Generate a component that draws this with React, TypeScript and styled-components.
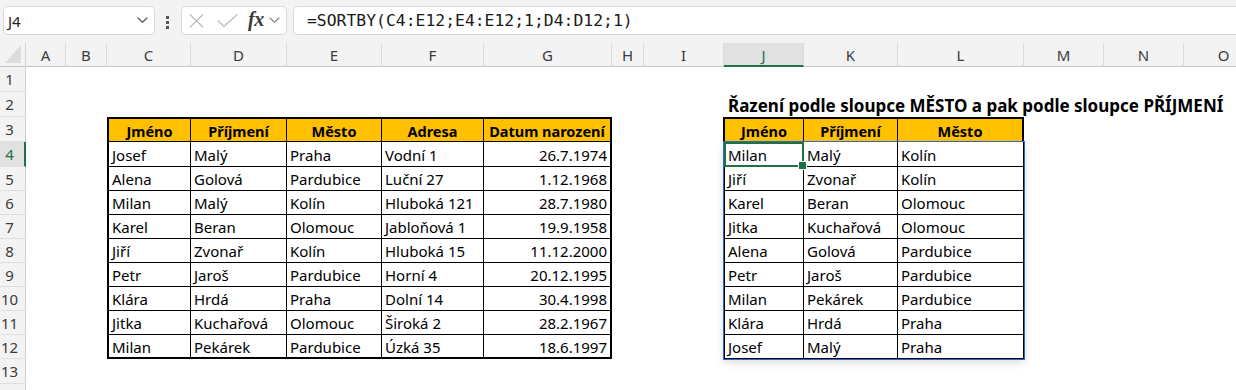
import React from "react";
import styled, { createGlobalStyle, css } from "styled-components";

const FONT = `"Noto Sans", "Liberation Sans", sans-serif`;
const GREEN = "#1e7145";
const CHROME = "#f3f3f3";

const COLS = [40, 41, 84, 96, 95, 102, 128, 32, 80, 80, 94, 126, 80, 80, 80];
const LETTERS = "ABCDEFGHIJKLMNO".split("");
const ROWS = [25, 25, 25, 25, 24, 24, 24, 24, 24, 24, 24, 24, 25, 24];
const LABELLED_ROWS = 13;
const ACTIVE_COL = "J";
const ACTIVE_ROW = 4;

const px = (a: number[]) => a.map((v) => `${v}px`).join(" ");
const shrinkEnds = (a: number[], by: number, byEnd = by) =>
  a.map((v, i) => v - (i === 0 ? by : 0) - (i === a.length - 1 ? byEnd : 0));

const GlobalStyle = createGlobalStyle`
  html, body { margin: 0; padding: 0; background: #fff; }
  body { font-family: ${FONT}; color: #000; }
  * { box-sizing: border-box; }
`;

const Window = styled.div`
  width: 1236px;
  height: 390px;
  overflow: hidden;
  background: #fff;
  display: flex;
  flex-direction: column;
`;

/* ---------- formula bar ---------- */
const FormulaBar = styled.div`
  flex: none;
  height: 43px;
  background: ${CHROME};
  display: flex;
  align-items: flex-start;
  padding: 6px 0 0 3px;
`;

const Field = styled.div`
  height: 29px;
  background: #fff;
  border: 1px solid #d9d9d9;
  border-radius: 5px;
  display: flex;
  align-items: center;
`;

const NameBox = styled(Field)`
  width: 152px;
  padding: 0 6px 0 4px;
  justify-content: space-between;
  font-size: 15px;
  color: #1f1f1f;
`;

const Dots = styled.div`
  width: 3px;
  margin: 10px 12px 0 11px;
  display: flex;
  flex-direction: column;
  gap: 2px;
  & > span {
    width: 3px;
    height: 3px;
    background: #555;
  }
`;

const FxGroup = styled(Field)`
  width: 106px;
  padding: 0 2px 0 6px;
`;

const IconGap = styled.span`
  width: 12px;
`;

const FxText = styled.span`
  font-family: "Liberation Serif", "DejaVu Serif", serif;
  font-style: italic;
  font-weight: bold;
  font-size: 20px;
  color: #3a3a3a;
  margin: -3px 5px 0 10px;
  letter-spacing: -0.3px;
`;

const FormulaInput = styled(Field)`
  flex: 1;
  margin-left: 6px;
  margin-right: -6px;
  padding-left: 13px;
  font-family: "DejaVu Sans Mono", "Liberation Mono", monospace;
  font-size: 16.4px;
  color: #1a1a1a;
  white-space: nowrap;
`;

const Chevron = ({ w = 11, color = "#555" }: { w?: number; color?: string }) => (
  <svg width={w} height={w * 0.55} viewBox="0 0 11 6" fill="none">
    <polyline points="0.7,0.7 5.5,5.2 10.3,0.7" stroke={color} strokeWidth="1.3" />
  </svg>
);

const CancelIcon = () => (
  <svg width="17" height="14" viewBox="0 0 17 14" fill="none">
    <path d="M2 0.5 L15 13.2 M15 0.5 L2 13.2" stroke="#bcbcbc" strokeWidth="1.3" />
  </svg>
);

const EnterIcon = () => (
  <svg width="21" height="13" viewBox="0 0 21 13" fill="none">
    <path d="M0.8 6.5 L7 12.3 L20.3 0.6" stroke="#bcbcbc" strokeWidth="1.3" />
  </svg>
);

/* ---------- sheet grid ---------- */
const Sheet = styled.div`
  display: grid;
  grid-template-columns: 26px ${px(COLS)};
  grid-template-rows: 24px ${px(ROWS)};
  font-size: 15px;
`;

const Corner = styled.div`
  grid-column: 1;
  grid-row: 1;
  background: ${CHROME};
  border-right: 1px solid #d4d4d4;
  border-bottom: 1px solid #c4c4c4;
  position: relative;
  &::after {
    content: "";
    position: absolute;
    right: 4px;
    bottom: 3px;
    width: 16px;
    height: 18px;
    background: #dcdcdc;
    clip-path: polygon(100% 0, 100% 100%, 0 100%);
  }
`;

const ColHeader = styled.div<{ $active?: boolean }>`
  grid-row: 1;
  background: ${CHROME};
  border-right: 1px solid #dadada;
  border-bottom: 1px solid #c4c4c4;
  display: flex;
  align-items: center;
  justify-content: center;
  color: #3b3b3b;
  font-size: 15px;
  padding-top: 1px;
  ${(p) =>
    p.$active &&
    css`
      background: #e1e1e1;
      color: ${GREEN};
      border-bottom: 2px solid ${GREEN};
    `}
`;

const RowHeader = styled.div<{ $active?: boolean }>`
  grid-column: 1;
  background: ${CHROME};
  border-right: 1px solid #cfcfcf;
  border-bottom: 1px solid #dedede;
  display: flex;
  align-items: center;
  justify-content: center;
  padding-right: 6px;
  color: #3b3b3b;
  font-size: 15px;
  ${(p) =>
    p.$active &&
    css`
      background: #e1e1e1;
      color: ${GREEN};
      border-right: 2px solid ${GREEN};
      padding-right: 5px;
    `}
`;

/* ---------- tables ---------- */
type Align = "left" | "right" | "center";

const Cell = styled.div<{
  $align?: Align;
  $head?: boolean;
  $lastCol?: boolean;
  $lastRow?: boolean;
  $selected?: boolean;
}>`
  position: relative;
  display: flex;
  align-items: center;
  padding: 1px 3px 0 3px;
  white-space: nowrap;
  border-right: ${(p) => (p.$lastCol ? "none" : "1px solid #000")};
  border-bottom: ${(p) => (p.$lastRow ? "none" : "1px solid #000")};
  justify-content: ${(p) =>
    p.$align === "right" ? "flex-end" : p.$align === "center" ? "center" : "flex-start"};
  ${(p) =>
    p.$head &&
    css`
      background: #ffc000;
      font-weight: bold;
      font-size: 14.5px;
    `}
  ${(p) =>
    p.$selected &&
    css`
      &::after {
        content: "";
        position: absolute;
        left: -1px;
        top: 0;
        right: -1px;
        bottom: -1px;
        border: 2px solid ${GREEN};
        z-index: 2;
      }
      &::before {
        content: "";
        position: absolute;
        right: -4px;
        bottom: -4px;
        width: 7px;
        height: 7px;
        background: ${GREEN};
        border: 1px solid #fff;
        z-index: 3;
      }
    `}
`;

const SourceTable = styled.div<{ $cols: number[]; $rows: number[] }>`
  grid-column: 4 / 9;
  grid-row: 4 / 14;
  display: grid;
  border: 2px solid #000;
  grid-template-columns: ${(p) => px(p.$cols)};
  grid-template-rows: ${(p) => px(p.$rows)};
`;

const Title = styled.div`
  grid-column: 11 / 17;
  grid-row: 3;
  align-self: end;
  padding: 0 0 0 4px;
  font-weight: bold;
  font-size: 17px;
  line-height: 23px;
  white-space: nowrap;
`;

const SpillTable = styled.div`
  grid-column: 11 / 14;
  grid-row: 4 / 14;
  display: flex;
  flex-direction: column;
`;

const SpillHead = styled.div<{ $cols: number[]; $h: number }>`
  display: grid;
  height: ${(p) => p.$h}px;
  margin: 0 0 0 -1px;
  border: 2px solid #000;
  border-bottom: 1px solid #000;
  grid-template-columns: ${(p) => px(p.$cols)};
`;

const SpillBody = styled.div<{ $cols: number[]; $rows: number[] }>`
  display: grid;
  border: 1px solid #000;
  border-top: none;
  grid-template-columns: ${(p) => px(p.$cols)};
  grid-template-rows: ${(p) => px(p.$rows)};
  box-shadow: 0 0 0 1px #2d66cf, 0 3px 9px rgba(0, 0, 0, 0.16);
`;

const PEOPLE: string[][] = [
  ["Josef", "Malý", "Praha", "Vodní 1", "26.7.1974"],
  ["Alena", "Golová", "Pardubice", "Luční 27", "1.12.1968"],
  ["Milan", "Malý", "Kolín", "Hluboká 121", "28.7.1980"],
  ["Karel", "Beran", "Olomouc", "Jabloňová 1", "19.9.1958"],
  ["Jiří", "Zvonař", "Kolín", "Hluboká 15", "11.12.2000"],
  ["Petr", "Jaroš", "Pardubice", "Horní 4", "20.12.1995"],
  ["Klára", "Hrdá", "Praha", "Dolní 14", "30.4.1998"],
  ["Jitka", "Kuchařová", "Olomouc", "Široká 2", "28.2.1967"],
  ["Milan", "Pekárek", "Pardubice", "Úzká 35", "18.6.1997"],
];

const HEADERS = ["Jméno", "Příjmení", "Město", "Adresa", "Datum narození"];

const SORTED: string[][] = [
  ["Milan", "Malý", "Kolín"],
  ["Jiří", "Zvonař", "Kolín"],
  ["Karel", "Beran", "Olomouc"],
  ["Jitka", "Kuchařová", "Olomouc"],
  ["Alena", "Golová", "Pardubice"],
  ["Petr", "Jaroš", "Pardubice"],
  ["Milan", "Pekárek", "Pardubice"],
  ["Klára", "Hrdá", "Praha"],
  ["Josef", "Malý", "Praha"],
];

export default function App() {
  // source table C3:G12
  const srcCols = shrinkEnds(COLS.slice(2, 7), 2);
  const srcRows = shrinkEnds(ROWS.slice(2, 12), 2);
  // spill table J3:L12
  const headCols = [COLS[9] - 1, COLS[10], COLS[11] - 2];
  const bodyCols = [COLS[9] - 1, COLS[10], COLS[11] - 1];
  const bodyRows = shrinkEnds(ROWS.slice(3, 12), 0, 1);

  return (
    <Window>
      <GlobalStyle />
      <FormulaBar>
        <NameBox>
          <span>J4</span>
          <Chevron />
        </NameBox>
        <Dots>
          <span />
          <span />
          <span />
        </Dots>
        <FxGroup>
          <CancelIcon />
          <IconGap />
          <EnterIcon />
          <FxText>fx</FxText>
          <Chevron w={11} color="#888" />
        </FxGroup>
        <FormulaInput>=SORTBY(C4:E12;E4:E12;1;D4:D12;1)</FormulaInput>
      </FormulaBar>

      <Sheet>
        <Corner />
        {LETTERS.map((l, i) => (
          <ColHeader key={l} $active={l === ACTIVE_COL} style={{ gridColumn: i + 2 }}>
            {l}
          </ColHeader>
        ))}
        {ROWS.map((_, i) => (
          <RowHeader key={i} $active={i + 1 === ACTIVE_ROW} style={{ gridRow: i + 2 }}>
            {i < LABELLED_ROWS ? i + 1 : null}
          </RowHeader>
        ))}

        <SourceTable $cols={srcCols} $rows={srcRows}>
          {HEADERS.map((h, c) => (
            <Cell key={h} $head $align="center" $lastCol={c === 4}>
              {h}
            </Cell>
          ))}
          {PEOPLE.map((row, r) =>
            row.map((v, c) => (
              <Cell
                key={`${r}-${c}`}
                $align={c === 4 ? "right" : "left"}
                $lastCol={c === 4}
                $lastRow={r === PEOPLE.length - 1}
              >
                {v}
              </Cell>
            ))
          )}
        </SourceTable>

        <Title>Řazení podle sloupce MĚSTO a pak podle sloupce PŘÍJMENÍ</Title>

        <SpillTable>
          <SpillHead $cols={headCols} $h={ROWS[2]}>
            {HEADERS.slice(0, 3).map((h, c) => (
              <Cell key={h} $head $align="center" $lastRow $lastCol={c === 2}>
                {h}
              </Cell>
            ))}
          </SpillHead>
          <SpillBody $cols={bodyCols} $rows={bodyRows}>
            {SORTED.map((row, r) =>
              row.map((v, c) => (
                <Cell
                  key={`${r}-${c}`}
                  $lastCol={c === 2}
                  $lastRow={r === SORTED.length - 1}
                  $selected={r === 0 && c === 0}
                >
                  {v}
                </Cell>
              ))
            )}
          </SpillBody>
        </SpillTable>
      </Sheet>
    </Window>
  );
}
